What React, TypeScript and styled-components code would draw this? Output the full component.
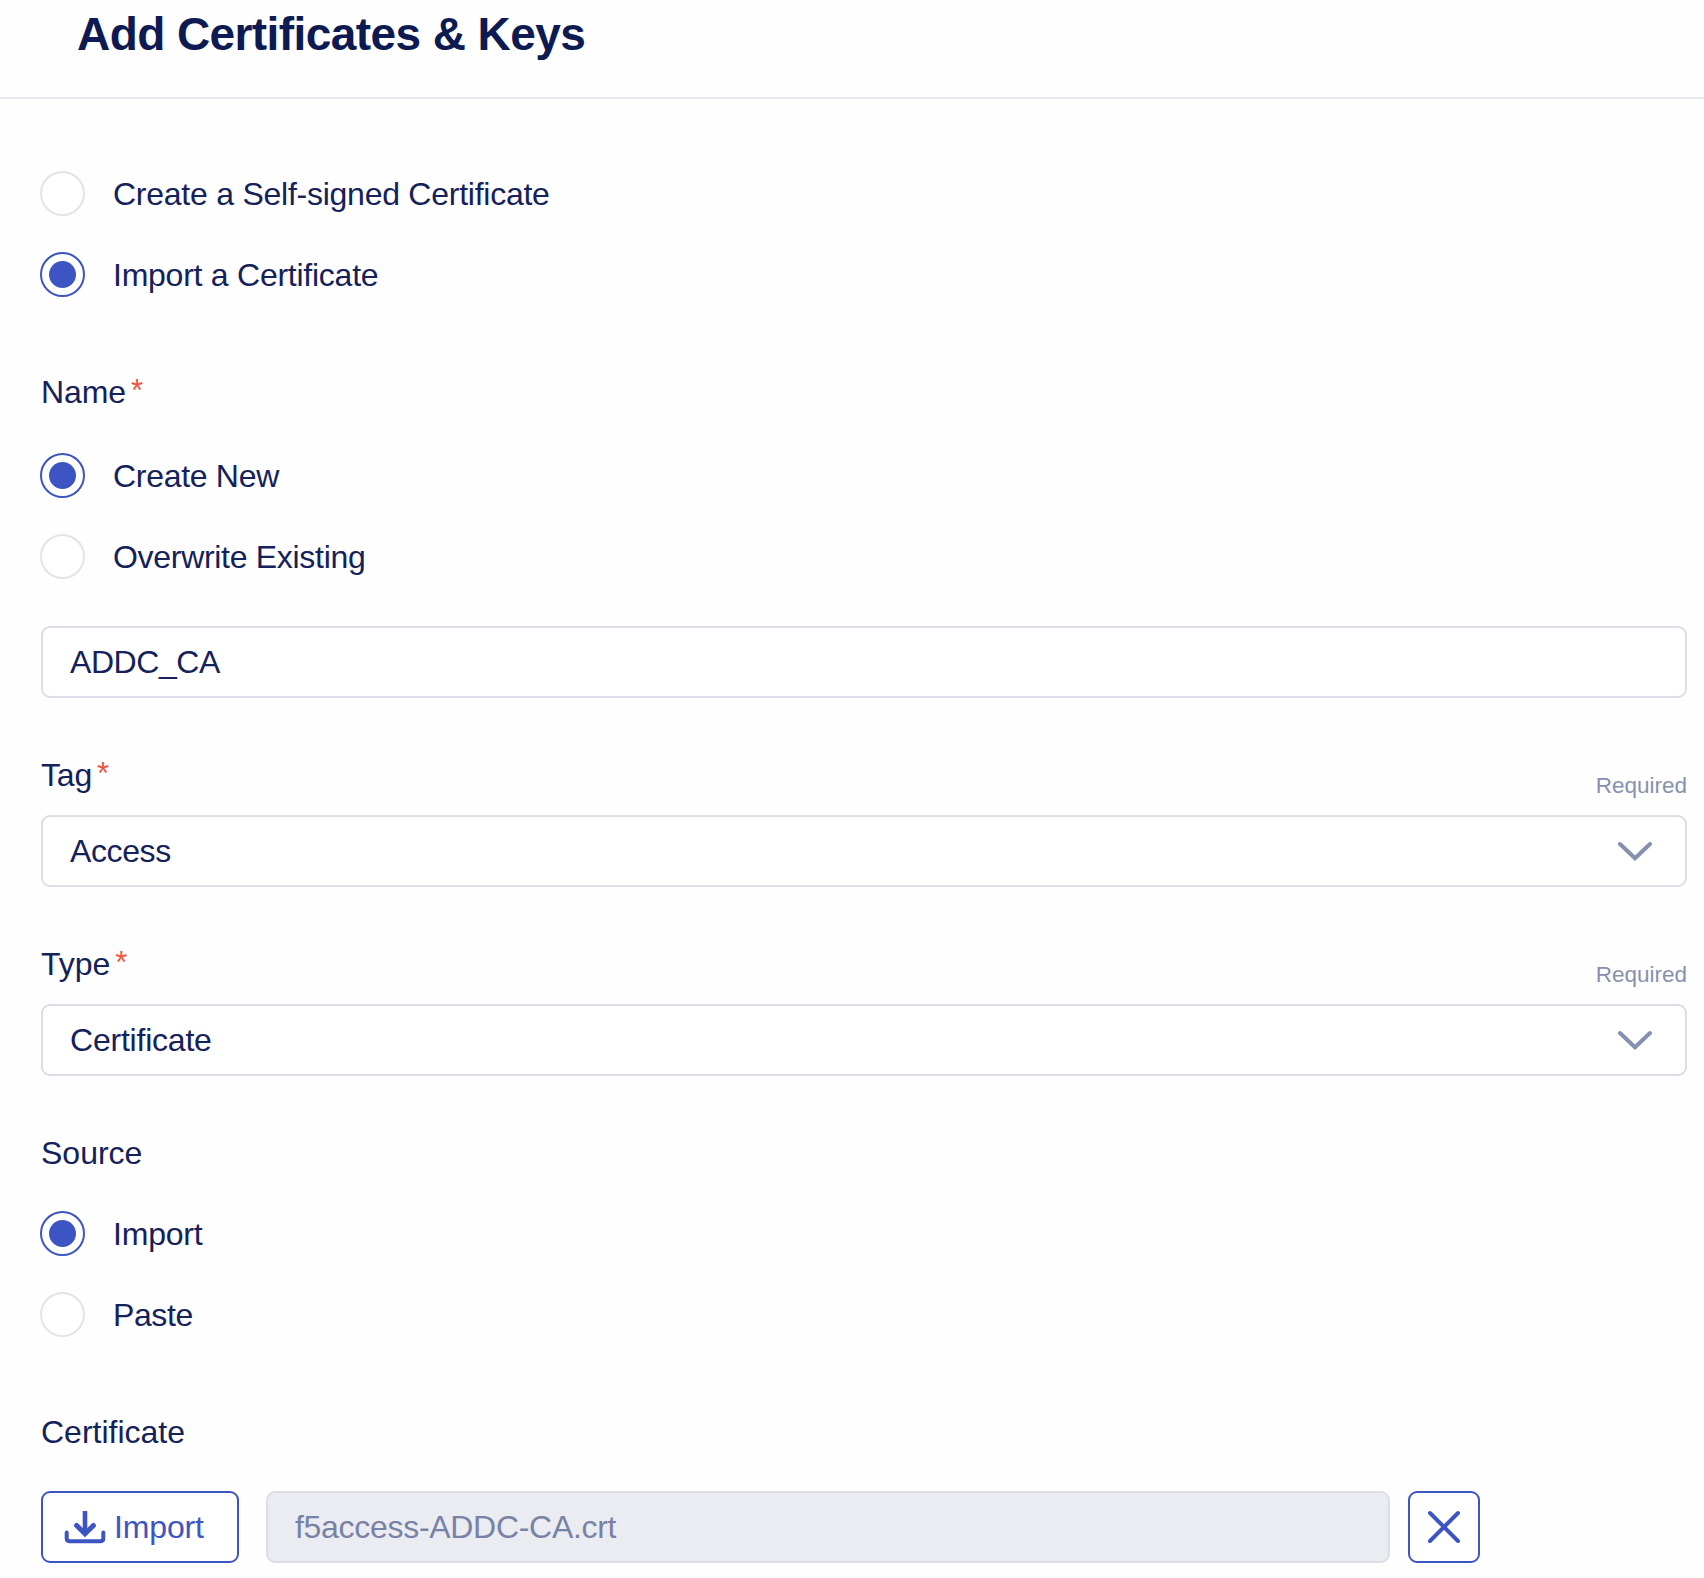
import React, { useState } from "react";
import styled, { createGlobalStyle } from "styled-components";

const color = {
  title: "#0e1a52",
  text: "#14215a",
  primary: "#3d55c2",
  border: "#dbdee6",
  muted: "#8890b0",
  danger: "#f0563f",
};

const GlobalStyle = createGlobalStyle`
  *, *::before, *::after { box-sizing: border-box; }
  body {
    margin: 0;
    background: #fefefe;
    color: ${color.text};
    font-family: "Liberation Sans", Arial, sans-serif;
    font-size: 32px;
    font-variant-ligatures: none;
  }
  input, button { font: inherit; color: inherit; }
`;

const Page = styled.div`
  display: flex;
  flex-direction: column;
  min-height: 1578px;
  overflow: hidden;
`;

const Header = styled.header`
  height: 99px;
  padding: 11px 77px 0;
  border-bottom: 2px solid #e6e8f0;
`;

const Title = styled.h1`
  margin: 0;
  font-size: 46px;
  line-height: 46px;
  font-weight: 700;
  letter-spacing: -0.58px;
  color: ${color.title};
`;

const Form = styled.form`
  display: flex;
  flex-direction: column;
  padding: 72px 17px 0 41px;
`;

const Section = styled.section<{ $top?: number; $gap?: number }>`
  display: flex;
  flex-direction: column;
  margin-top: ${(p) => p.$top ?? 0}px;
  gap: ${(p) => p.$gap ?? 0}px;
`;

const RadioGroup = styled.div`
  display: flex;
  flex-direction: column;
  gap: 36px;
`;

const RadioRow = styled.label`
  display: flex;
  align-items: center;
  gap: 28px;
  height: 45px;
  cursor: pointer;
`;

const RadioInput = styled.input`
  appearance: none;
  display: grid;
  place-items: center;
  flex: none;
  width: 45px;
  height: 45px;
  margin: 0 0 0 -1px;
  border: 2px solid #e2e4eb;
  border-radius: 50%;
  background: #fff;

  &:checked {
    border-color: ${color.primary};
  }
  &:checked::before {
    content: "";
    width: 27px;
    height: 27px;
    border-radius: 50%;
    background: ${color.primary};
  }
`;

const Text = styled.span<{ $track?: number }>`
  line-height: 36px;
  white-space: nowrap;
  letter-spacing: ${(p) => p.$track ?? 0}px;
`;

const LabelRow = styled.div`
  display: flex;
  align-items: flex-end;
  justify-content: space-between;
  height: 36px;
`;

const LabelText = styled.div`
  display: flex;
  gap: 5px;
`;

const Asterisk = styled.span`
  font-size: 31px;
  line-height: 33px;
  color: ${color.danger};
`;

const Hint = styled.span`
  font-size: 22.5px;
  line-height: 14px;
  color: ${color.muted};
`;

const Field = styled.input<{ $track?: number }>`
  width: 100%;
  height: 72px;
  padding: 0 27px;
  border: 2px solid ${color.border};
  border-radius: 9px;
  background: #fff;
  outline: none;
  letter-spacing: ${(p) => p.$track ?? 0}px;

  &:disabled {
    background: #ebecf1;
    border-color: #dcdfe6;
    color: #7882a6;
  }
`;

const SelectBox = styled.div`
  display: flex;
  align-items: center;
  justify-content: space-between;
  height: 72px;
  padding: 0 32px 0 27px;
  border: 2px solid ${color.border};
  border-radius: 9px;
  background: #fff;
  cursor: pointer;
`;

const FileRow = styled.div`
  display: flex;
`;

const FileName = styled.div`
  flex: none;
  width: 1124px;
  margin: 0 18px 0 27px;
`;

const OutlineButton = styled.button<{ $square?: boolean }>`
  display: flex;
  align-items: center;
  justify-content: ${(p) => (p.$square ? "center" : "flex-start")};
  gap: 8px;
  flex: none;
  width: ${(p) => (p.$square ? 72 : 198)}px;
  height: 72px;
  padding: ${(p) => (p.$square ? "0" : "0 0 0 21px")};
  border: 2px solid ${color.primary};
  border-radius: 9px;
  background: #fff;
  color: ${color.primary};
  cursor: pointer;
`;

const Icon = styled.svg`
  display: block;
  flex: none;
  fill: none;
  stroke: currentColor;
`;

const ChevronIcon = styled(Icon)`
  color: ${color.muted};
`;

type Option = { label: string; track?: number };

function Radios({ name, options, initial }: { name: string; options: Option[]; initial: number }) {
  const [selected, setSelected] = useState(initial);
  return (
    <RadioGroup role="radiogroup">
      {options.map((o, i) => (
        <RadioRow key={o.label}>
          <RadioInput type="radio" name={name} checked={selected === i} onChange={() => setSelected(i)} />
          <Text $track={o.track}>{o.label}</Text>
        </RadioRow>
      ))}
    </RadioGroup>
  );
}

function Label({ text, track, required, hint }: { text: string; track?: number; required?: boolean; hint?: string }) {
  return (
    <LabelRow>
      <LabelText>
        <Text $track={track}>{text}</Text>
        {required && <Asterisk>*</Asterisk>}
      </LabelText>
      {hint && <Hint>{hint}</Hint>}
    </LabelRow>
  );
}

function Select({ value, track }: { value: string; track?: number }) {
  return (
    <SelectBox role="combobox" aria-expanded="false" tabIndex={0}>
      <Text $track={track}>{value}</Text>
      <ChevronIcon width="36" height="20" viewBox="0 0 36 20" strokeWidth="4" strokeLinecap="round">
        <path d="M3 3 L18 17.3 L33 3" />
      </ChevronIcon>
    </SelectBox>
  );
}

export default function App() {
  const [name, setName] = useState("ADDC_CA");
  return (
    <Page>
      <GlobalStyle />
      <Header>
        <Title>Add Certificates &amp; Keys</Title>
      </Header>
      <Form>
        <Radios
          name="mode"
          initial={1}
          options={[
            { label: "Create a Self-signed Certificate", track: -0.25 },
            { label: "Import a Certificate", track: -0.25 },
          ]}
        />
        <Section $top={77} $gap={43}>
          <Label text="Name" track={-0.1} required />
          <Radios
            name="target"
            initial={0}
            options={[
              { label: "Create New", track: -0.3 },
              { label: "Overwrite Existing", track: -0.3 },
            ]}
          />
        </Section>
        <Section $top={47}>
          <Field value={name} $track={-0.42} onChange={(e) => setName(e.target.value)} />
        </Section>
        <Section $top={59} $gap={22}>
          <Label text="Tag" track={-0.2} required hint="Required" />
          <Select value="Access" track={-0.4} />
        </Section>
        <Section $top={59} $gap={22}>
          <Label text="Type" track={-0.05} required hint="Required" />
          <Select value="Certificate" track={-0.22} />
        </Section>
        <Section $top={59} $gap={40}>
          <Label text="Source" track={0} />
          <Radios
            name="source"
            initial={0}
            options={[
              { label: "Import", track: -0.2 },
              { label: "Paste", track: -0.4 },
            ]}
          />
        </Section>
        <Section $top={77} $gap={41}>
          <Label text="Certificate" track={0} />
          <FileRow>
            <OutlineButton type="button">
              <Icon width="42" height="34" viewBox="0 0 42 34">
                <path d="M21 1 V24" strokeWidth="4.6" />
                <path d="M12.6 15.5 L21 23.8 L29.4 15.5" strokeWidth="5" strokeLinecap="round" />
                <path
                  d="M2.7 22.5 V28.5 Q2.7 31.3 6 31.3 H36 Q39.3 31.3 39.3 28.5 V22.5"
                  strokeWidth="4"
                  strokeLinecap="round"
                />
              </Icon>
              <Text $track={-0.15}>Import</Text>
            </OutlineButton>
            <FileName>
              <Field value="f5access-ADDC-CA.crt" $track={-0.3} disabled readOnly />
            </FileName>
            <OutlineButton type="button" $square aria-label="Remove file">
              <Icon width="34" height="34" viewBox="0 0 34 34" strokeWidth="4" strokeLinecap="round">
                <path d="M3 3 L31 31 M31 3 L3 31" />
              </Icon>
            </OutlineButton>
          </FileRow>
        </Section>
      </Form>
    </Page>
  );
}
